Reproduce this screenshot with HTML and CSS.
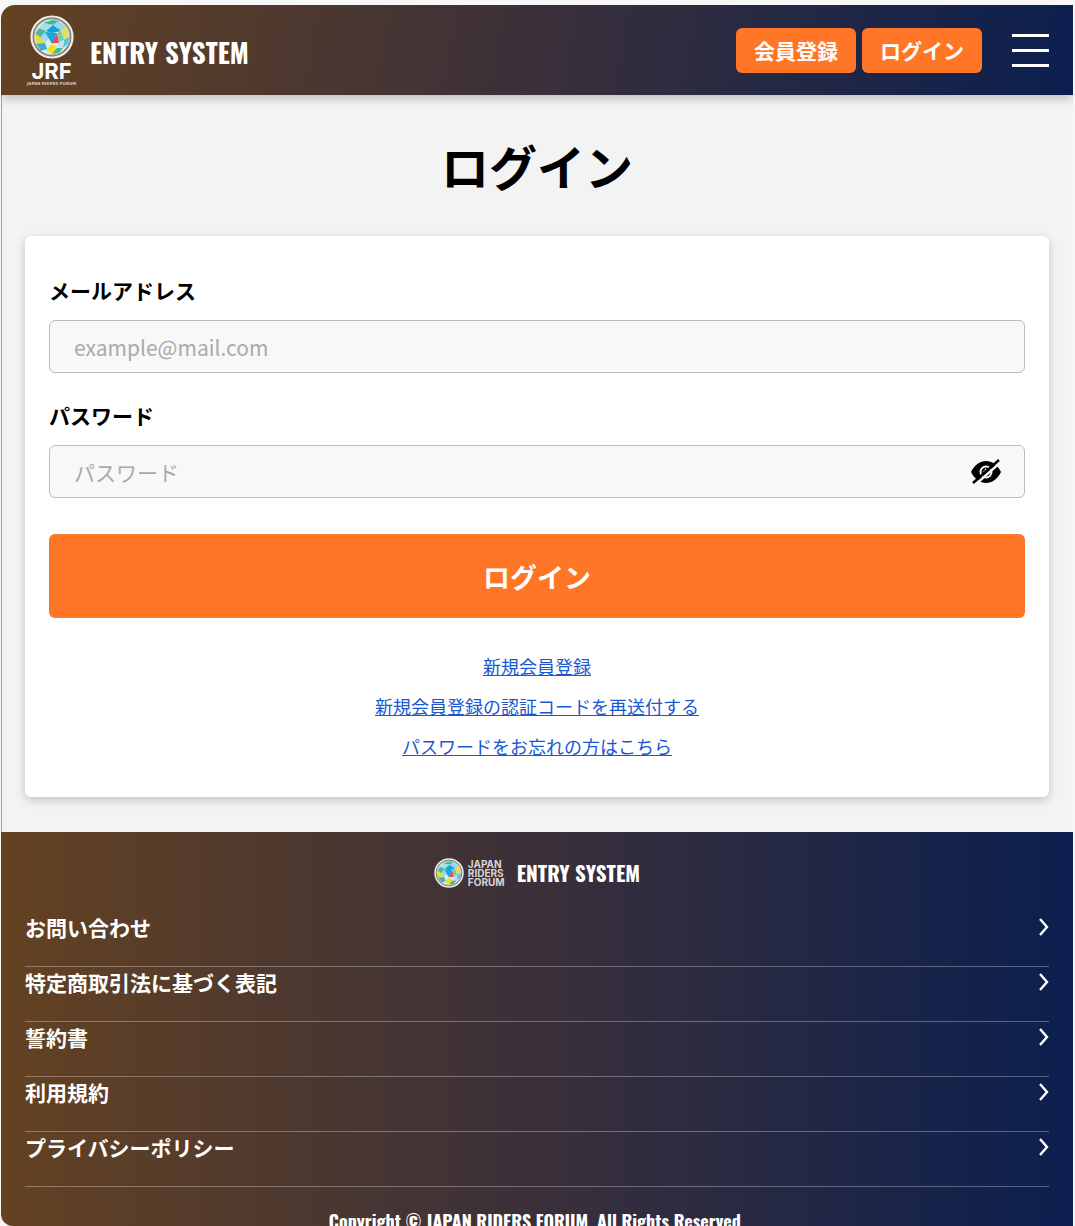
FILE: index.html
```html
<!DOCTYPE html>
<html lang="ja">
<head>
<meta charset="utf-8">
<meta name="viewport" content="width=device-width, initial-scale=1">
<title>ログイン | ENTRY SYSTEM</title>
<link rel="stylesheet" href="styles.css">
</head>
<body>
<svg class="sprite" aria-hidden="true">
  <symbol id="globe" viewBox="0 0 44 44">
    <circle cx="22" cy="22" r="20.5" fill="#766c66" stroke="#f1ece8" stroke-width="2.2"/>
    <circle cx="22" cy="22" r="18" fill="#d9eff2" stroke="#b5aaa2" stroke-width="1"/>
    <path d="M13 8 22 5 29 6 23 10Z" fill="#42b89b"/>
    <path d="M23 10 29 6 36 12 31 16Z" fill="#9bd7e9"/>
    <path d="M13 8 23 10 16 16 9 13Z" fill="#a8dce8"/>
    <path d="M23 10 31 16 22 18 15 17Z" fill="#139fd8"/>
    <path d="M9 13 16 16 10 23 5 19Z" fill="#51b69a"/>
    <path d="M5 18 10 22 15 28 6 30Z" fill="#e7de35"/>
    <path d="M10 23 16 16 22 18 15 28Z" fill="#9bdcec"/>
    <path d="M15 17 27 18 22 29Z" fill="#1aa9df"/>
    <path d="M27 18 29 28 22 28Z" fill="#e94858"/>
    <path d="M31 15 36 11 39 20 34 26Z" fill="#e4df58"/>
    <path d="M27 18 31 16 34 25 29 27Z" fill="#78cbb4"/>
    <path d="M34 25 40 21 38 29 33 33Z" fill="#5ec3df"/>
    <path d="M29 27 34 25 33 33 27 32Z" fill="#b9e3ef"/>
    <path d="M22 29 28 33 22 39 16 35Z" fill="#f0df24"/>
    <path d="M6 29 15 28 17 34 11 36Z" fill="#3caed4"/>
    <path d="M27 33 33 33 29 38 22 39Z" fill="#43b8a0"/>
  </symbol>
  <symbol id="chevron" viewBox="0 0 10 18">
    <path d="M1 1 8 9 1 17" fill="none" stroke="currentColor" stroke-width="2.4"/>
  </symbol>
</svg>
<div class="frame">
  <header class="header">
    <a class="brand" href="#">
      <span class="emblem">
        <svg class="emblem-globe" aria-hidden="true"><use href="#globe"/></svg>
        <span class="emblem-name">JRF</span>
        <span class="emblem-sub">JAPAN RIDERS FORUM</span>
      </span>
      <span class="brand-title">ENTRY SYSTEM</span>
    </a>
    <div class="actions">
      <button class="action" type="button">会員登録</button>
      <button class="action" type="button">ログイン</button>
      <button class="menu" type="button" aria-label="メニュー"><span></span><span></span><span></span></button>
    </div>
  </header>
  <main class="main">
    <h1 class="title">ログイン</h1>
    <form class="card">
      <div class="field">
        <label class="label" for="email">メールアドレス</label>
        <input class="input" id="email" type="email" placeholder="example@mail.com">
      </div>
      <div class="field">
        <label class="label" for="password">パスワード</label>
        <div class="password">
          <input class="input" id="password" type="password" placeholder="パスワード">
          <button class="reveal" type="button" aria-label="パスワードを表示">
            <svg viewBox="0 0 30 26" aria-hidden="true">
              <path d="M0 13C4 5.500 9 2 15 2s11 3.500 15 11c-4 7.500-9 11-15 11S4 20.500 0 13Z"/>
              <circle cx="15" cy="13" r="6.500" fill="#f8f8f8"/>
              <circle cx="15" cy="13" r="4.500"/>
              <path d="M14 9a3.500 3.500 0 0 1-3 4l3 1 2-3Z" fill="#f8f8f8"/>
              <path d="M4 26 30 3" stroke="#f8f8f8" stroke-width="2.400"/>
              <path d="M2 24 28 1" stroke="#000" stroke-width="2.400"/>
            </svg>
          </button>
        </div>
      </div>
      <button class="submit" type="submit">ログイン</button>
      <div class="links">
        <a href="#">新規会員登録</a>
        <a href="#">新規会員登録の認証コードを再送付する</a>
        <a href="#">パスワードをお忘れの方はこちら</a>
      </div>
    </form>
  </main>
  <footer class="footer">
    <a class="footer-brand" href="#">
      <svg class="footer-globe" aria-hidden="true"><use href="#globe"/></svg>
      <span class="footer-name">JAPAN<br>RIDERS<br>FORUM</span>
      <span class="footer-title">ENTRY SYSTEM</span>
    </a>
    <nav class="footer-nav">
      <a href="#">お問い合わせ<svg aria-hidden="true"><use href="#chevron"/></svg></a>
      <a href="#">特定商取引法に基づく表記<svg aria-hidden="true"><use href="#chevron"/></svg></a>
      <a href="#">誓約書<svg aria-hidden="true"><use href="#chevron"/></svg></a>
      <a href="#">利用規約<svg aria-hidden="true"><use href="#chevron"/></svg></a>
      <a href="#">プライバシーポリシー<svg aria-hidden="true"><use href="#chevron"/></svg></a>
    </nav>
    <p class="copyright">Copyright © JAPAN RIDERS FORUM. All Rights Reserved.</p>
  </footer>
</div>
</body>
</html>
```
FILE: styles.css
```css
* { box-sizing: border-box; }
body {
  margin: 0;
  padding: 5px 2px 0 1px;
  background: #f7f7f7;
  color: #000;
  font-family: "Noto Sans CJK JP", sans-serif;
}
button, input { font: inherit; }
button { border: 0; padding: 0; cursor: pointer; }
a { color: inherit; text-decoration: none; }
.sprite { display: none; }
.frame {
  height: calc(100vh - 5px);
  overflow-y: auto;
  scrollbar-width: none;
  border-radius: 14px 0 0 12px;
  background: #f3f3f3;
}
.header, .footer { color: #fff; background: linear-gradient(90deg, #644222, #3a303a 50%, #0b1f4f); }
.header {
  position: relative;
  display: flex;
  align-items: center;
  justify-content: space-between;
  height: 90px;
  padding: 0 24px;
  background: linear-gradient(100deg, #644222, #3a303a 50%, #0b1f4f);
  box-shadow: 0 3px 10px rgba(0, 0, 0, .25);
}
.brand { display: flex; align-items: center; gap: 12px; }
.emblem { display: flex; flex-direction: column; align-items: center; width: 53px; padding-top: 2px; }
.emblem-globe { width: 44px; height: 44px; }
.emblem-name { padding-top: 2px; font: bold 22px/20px "Inter", sans-serif; }
.emblem-sub { color: #d5c5b8; font: bold 4px/6px "DejaVu Sans", sans-serif; white-space: nowrap; }
.brand-title, .footer-title, .copyright { font-family: "Oswald", "Liberation Sans Narrow", "Liberation Sans", sans-serif; font-weight: bold; }
.brand-title { padding-top: 4px; font-size: 27px; line-height: 40px; }
.actions { display: flex; align-items: center; gap: 6px; }
.action { width: 120px; height: 45px; border-radius: 6px; background: #ff7626; color: #fff; font-size: 21px; font-weight: bold; line-height: 30px; }
.menu { display: grid; gap: 12px; width: 37px; margin-left: 24px; background: none; }
.menu span { height: 3px; background: #fff; }
.main { padding: 36px 24px 35px; box-shadow: inset 1px 0 #9da2b3; }
.title { margin: 0 0 36px; font-size: 48px; line-height: 69px; text-align: center; }
.card { padding: 39px 24px 37px; border-radius: 6px; background: #fff; box-shadow: 0 3px 10px rgba(0, 0, 0, .2); }
.field { margin-bottom: 27px; }
.label { display: block; margin-bottom: 15px; font-size: 21px; font-weight: bold; line-height: 30px; }
.input { display: block; width: 100%; height: 53px; padding: 0 24px; border: 1px solid #bbb; border-radius: 6px; background: #f8f8f8; font-size: 21px; }
.input::placeholder { color: #aaa; }
.password { position: relative; }
.reveal { position: absolute; top: 14px; right: 24px; width: 30px; height: 26px; background: none; }
.reveal svg { display: block; width: 30px; height: 26px; }
.submit { width: 100%; height: 84px; margin-top: 9px; border-radius: 6px; background: #ff7626; color: #fff; font-size: 27px; font-weight: bold; }
.links { display: flex; flex-direction: column; align-items: center; gap: 13px; margin-top: 35px; color: #1a57d2; font-size: 18px; line-height: 27px; }
.links a { text-decoration: underline; }
.footer { padding: 24px 24px 20px; }
.footer-brand { display: flex; align-items: center; justify-content: center; height: 34px; }
.footer-globe { width: 30px; height: 30px; }
.footer-name { margin: 0 12px 0 4px; color: #d8d4d5; font: bold 10px/9px "Inter", sans-serif; }
.footer-title { font-size: 21px; line-height: 30px; }
.footer-nav { margin-top: 22px; }
.footer-nav a { display: flex; align-items: center; justify-content: space-between; padding-bottom: 24px; border-bottom: 1px solid rgba(255, 255, 255, .3); font-size: 21px; font-weight: bold; line-height: 30px; }
.footer-nav svg { width: 10px; height: 18px; }
.copyright { margin: 21px 0 0; font-size: 18px; line-height: 26px; text-align: center; }
```
